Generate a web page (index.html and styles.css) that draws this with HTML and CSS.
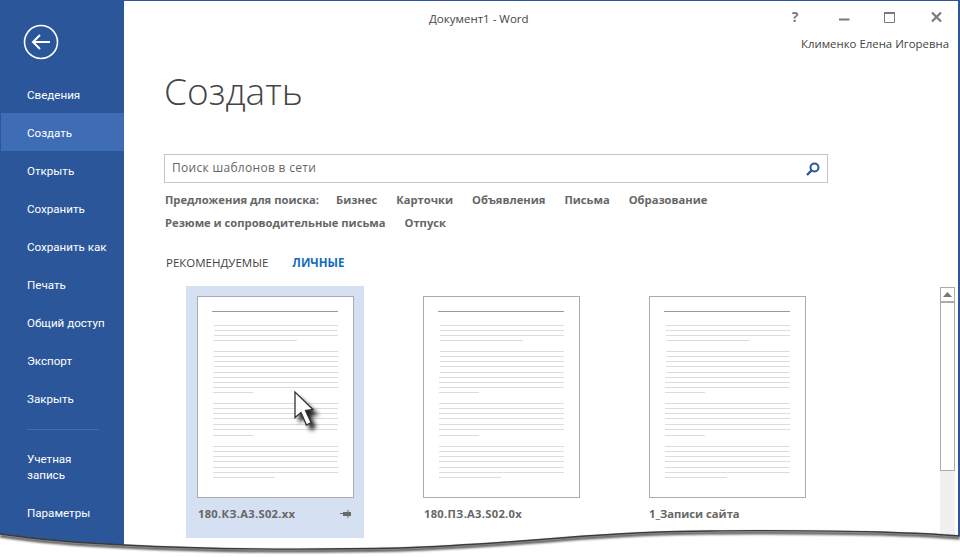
FILE: index.html
```html
<!DOCTYPE html>
<html lang="ru">
<head>
<meta charset="utf-8">
<title>Документ1 - Word</title>
<link rel="stylesheet" href="styles.css">
</head>
<body>
<svg class="defs" width="0" height="0" aria-hidden="true">
  <symbol id="page" viewBox="0 0 155 200">
    <path class="rule-head" d="M14 14.5H140"/>
    <path class="rule" d="M16 28.5H140M16 33.5H140M16 38.5H140M16 43.5H99M16 54.5H140M16 59.5H140M16 64.5H140M16 69.5H140M16 75.5H140M15 80.5H140M15 85.5H140M15 90.5H140M15 95.5H55M15 106.5H140M15 111.5H140M15 116.5H140M15 121.5H140M15 127.5H140M15 132.5H140M15 138.5H55M15 149.5H140M15 154.5H140M15 159.5H140M15 164.5H140M15 170.5H140M15 175.5H140M15 180.5H77"/>
  </symbol>
</svg>
<div class="app">
  <aside class="sidebar">
    <div class="back">
      <svg width="36" height="36" viewBox="0 0 36 36"><circle cx="18" cy="18" r="16.5" fill="none" stroke="#fff" stroke-width="1.6"/><path d="M27 18H10M17 11l-7 7 7 7" fill="none" stroke="#fff" stroke-width="2"/></svg>
    </div>
    <nav class="nav">
      <a class="nav-item">Сведения</a>
      <a class="nav-item active">Создать</a>
      <a class="nav-item">Открыть</a>
      <a class="nav-item">Сохранить</a>
      <a class="nav-item">Сохранить как</a>
      <a class="nav-item">Печать</a>
      <a class="nav-item">Общий доступ</a>
      <a class="nav-item">Экспорт</a>
      <a class="nav-item">Закрыть</a>
    </nav>
    <div class="nav-sep"></div>
    <a class="nav-account">Учетная<br>запись</a>
    <a class="nav-item">Параметры</a>
  </aside>
  <main class="main">
    <header class="titlebar">
      <span class="doc-title">Документ1 - Word</span>
      <div class="controls">
        <span class="ctl help">?</span>
        <svg class="ctl min" width="11" height="12" viewBox="0 0 11 12"><path d="M0 8.500h10.500" stroke="#7a7a7a" stroke-width="2"/></svg>
        <svg class="ctl max" width="11" height="12" viewBox="0 0 11 12"><path d="M.5 1.500h10v10H.5z" fill="none" stroke="#7a7a7a"/><path d="M0 2h11" stroke="#7a7a7a" stroke-width="2"/></svg>
        <svg class="ctl close" width="11" height="12" viewBox="0 0 11 12"><path d="M1 1.500l9 9M10 1.500l-9 9" stroke="#7a7a7a" stroke-width="2.200"/></svg>
      </div>
    </header>
    <div class="user">Клименко Елена Игоревна</div>
    <div class="content">
      <h1 class="heading">Создать</h1>
      <div class="search">
        <span class="search-text">Поиск шаблонов в сети</span>
        <svg width="16" height="16" viewBox="0 0 16 16"><circle cx="9.500" cy="6.500" r="4" fill="none" stroke="#2b579a" stroke-width="2"/><path d="M6.500 9.500L2 14" stroke="#2b579a" stroke-width="2.400"/></svg>
      </div>
      <div class="suggest">
        <span class="s-label">Предложения для поиска:</span>
        <a>Бизнес</a><a>Карточки</a><a>Объявления</a><a>Письма</a><a>Образование</a>
      </div>
      <div class="suggest second">
        <a>Резюме и сопроводительные письма</a><a>Отпуск</a>
      </div>
      <div class="tabs">
        <span class="tab">РЕКОМЕНДУЕМЫЕ</span>
        <span class="tab current">ЛИЧНЫЕ</span>
      </div>
    </div>
    <div class="gallery">
      <div class="cards">
        <figure class="card selected">
          <svg class="page" viewBox="0 0 155 200"><use href="#page"/></svg>
          <figcaption class="caption code">180.КЗ.А3.S02.xx
            <svg class="pin" width="11" height="8" viewBox="0 0 11 8"><path d="M0 3.500h4" stroke="#6a6a6a"/><path d="M3 2h4.500V0H8.500V2H11V6H8.500V8H7.500V6H3z" fill="#6a6a6a"/></svg>
          </figcaption>
        </figure>
        <figure class="card">
          <svg class="page" viewBox="0 0 155 200"><use href="#page"/></svg>
          <figcaption class="caption code">180.ПЗ.А3.S02.0x</figcaption>
        </figure>
        <figure class="card">
          <svg class="page" viewBox="0 0 155 200"><use href="#page"/></svg>
          <figcaption class="caption">1_Записи сайта</figcaption>
        </figure>
      </div>
      <div class="scrollbar">
        <div class="sb-btn"><svg width="9" height="5" viewBox="0 0 9 5"><path d="M4.500 0L9 5H0z" fill="#777"/></svg></div>
        <div class="sb-thumb"></div>
      </div>
    </div>
  </main>
</div>
<svg class="cursor" width="40" height="50" viewBox="0 0 40 50" aria-hidden="true">
  <defs><filter id="cs" x="-40%" y="-40%" width="180%" height="180%"><feGaussianBlur stdDeviation="2"/></filter></defs>
  <path d="M3 3V29L9 24L15 37L20 33L15 22L23 21Z" transform="translate(4 4)" fill="#222" filter="url(#cs)"/>
  <path d="M3 2V27.500L9 22.500L14.500 35L19 32.500L13.500 20.500L21 19.500Z" fill="#fff" stroke="#333" stroke-width="1.300"/>
</svg>
<svg class="tear" width="960" height="557" viewBox="0 0 960 557" aria-hidden="true">
  <defs><filter id="ts" x="-2%" y="-50%" width="104%" height="200%"><feGaussianBlur stdDeviation="1.300"/></filter></defs>
  <path class="tear-fill" d="M0 534C40 540 80 543 124 545C200 549 300 550 400 548C460 546 510 542 560 538C610 534 660 531 710 531C770 530 830 531 880 532C910 533 935 534 960 536V557H0Z"/>
  <path class="tear-soft" filter="url(#ts)" d="M0 536C40 542 80 545 124 547C200 551 300 552 400 550C460 548 510 544 560 540C610 536 660 533 710 533C770 532 830 533 880 534C910 535 935 536 960 538"/>
  <path class="tear-line" d="M0 534C40 540 80 543 124 545C200 549 300 550 400 548C460 546 510 542 560 538C610 534 660 531 710 531C770 530 830 531 880 532C910 533 935 534 960 536"/>
</svg>
</body>
</html>
```
FILE: styles.css
```css
* { box-sizing: border-box; }
html, body { margin: 0; height: 100%; }
body {
  position: relative;
  width: 960px;
  height: 557px;
  overflow: hidden;
  background: #fff;
  font-family: "Open Sans", "Noto Sans", sans-serif;
  color: #444;
}
.defs { position: absolute; }
.rule-head { stroke: #9a9a9a; stroke-width: 1; fill: none; }
.rule { stroke: #dcdcdc; stroke-width: 1; fill: none; }

.app {
  display: flex;
  width: 960px;
  height: 557px;
  border-top: 1px solid #2b579a;
  border-right: 2px solid #2b579a;
}
.sidebar {
  flex: 0 0 124px;
  background: #2b579a;
  color: #fff;
  font-family: Roboto, "Open Sans", sans-serif;
  font-size: 11.600px;
  padding-left: 1px;
  display: flex;
  flex-direction: column;
}
.back { height: 73px; padding: 23px 0 0 22px; }
.nav { padding-top: 1px; display: flex; flex-direction: column; }
.nav-item {
  display: block;
  height: 38px;
  line-height: 40px;
  padding-left: 26px;
}
.nav-item.active { background: #3e6db5; }
.nav-sep {
  height: 1px;
  margin: 12px 25px 0 26px;
  background: #3e6db5;
}
.nav-account {
  display: block;
  padding: 21px 0 10px 26px;
  line-height: 16px;
}
.main { flex: 1; min-width: 0; display: flex; flex-direction: column; }
.titlebar {
  display: flex;
  align-items: center;
  height: 35px;
  padding-left: 305px;
  font-size: 11.500px;
  color: #444;
}
.controls { margin-left: auto; display: flex; align-items: center; position: relative; top: -2px; }
.ctl { flex: none; }
.help { width: 12px; margin-right: 38px; font-weight: 700; font-size: 14px; color: #7a7a7a; text-align: center; }
.min { margin-right: 34px; }
.max { margin-right: 36px; }
.close { margin-right: 16px; }
.user { height: 16px; line-height: 16px; padding-right: 9px; text-align: right; font-size: 11.400px; color: #444; }
.content { padding-left: 40px; }
.heading {
  margin: 15px 0 0;
  height: 48px;
  line-height: 48px;
  font-size: 37px;
  font-weight: 300;
  color: #444;
}
.search {
  display: flex;
  align-items: center;
  justify-content: space-between;
  width: 664px;
  height: 29px;
  margin-top: 39px;
  padding: 0 6px 0 7px;
  border: 1px solid #c6c6c6;
}
.search-text { padding-bottom: 2px; font-size: 12px; letter-spacing: .3px; color: #666; }
.suggest {
  display: flex;
  gap: 19px;
  height: 23px;
  line-height: 23px;
  margin-top: 5px;
  padding-left: 1px;
  font-size: 11.200px;
  font-weight: 700;
  color: #666;
  white-space: nowrap;
}
.suggest.second { margin-top: 0; }
.s-label { margin-right: -2px; }
.tabs { display: flex; gap: 24px; margin-top: 19px; height: 20px; line-height: 20px; padding-left: 2px; font-size: 11.500px; }
.tab { color: #444; }
.tab.current { color: #0f6cbd; font-weight: 700; }
.gallery { display: flex; margin-top: 13px; padding-left: 62px; flex: 1; min-height: 0; }
.cards { display: flex; gap: 48px; flex: 1; align-items: flex-start; }
.card {
  margin: 0;
  width: 178px;
  height: 252px;
  padding: 10px 10px 0 11px;
}
.card.selected { background: #d5e0f2; }
.page {
  display: block;
  width: 157px;
  height: 202px;
  background: #fff;
  border: 1px solid #ababab;
}
.caption {
  display: flex;
  align-items: center;
  justify-content: space-between;
  height: 30px;
  margin-top: 0;
  padding-top: 1px;
  font-size: 11.200px;
  font-weight: 700;
  color: #666;
}
.caption.code { padding-left: 1px; letter-spacing: .28px; }
.pin { margin-right: 3px; }
.scrollbar {
  flex: 0 0 15px;
  margin: 1px 3px 0 0;
  background: #f0f0f0;
  display: flex;
  flex-direction: column;
}
.sb-btn {
  height: 16px;
  background: #fff;
  border: 1px solid #ababab;
  border-bottom-width: 2px;
  display: flex;
  align-items: center;
  justify-content: center;
}
.sb-thumb {
  height: 168px;
  background: #fff;
  border: 1px solid #ababab;
  border-top: 0;
}
.cursor { position: absolute; left: 292px; top: 390px; }
.tear { position: absolute; left: 0; top: 0; pointer-events: none; }
.tear-fill { fill: #fff; }
.tear-soft { fill: none; stroke: #555; stroke-width: 3; }
.tear-line { fill: none; stroke: #3a3a3a; stroke-width: 1.400; }
```
